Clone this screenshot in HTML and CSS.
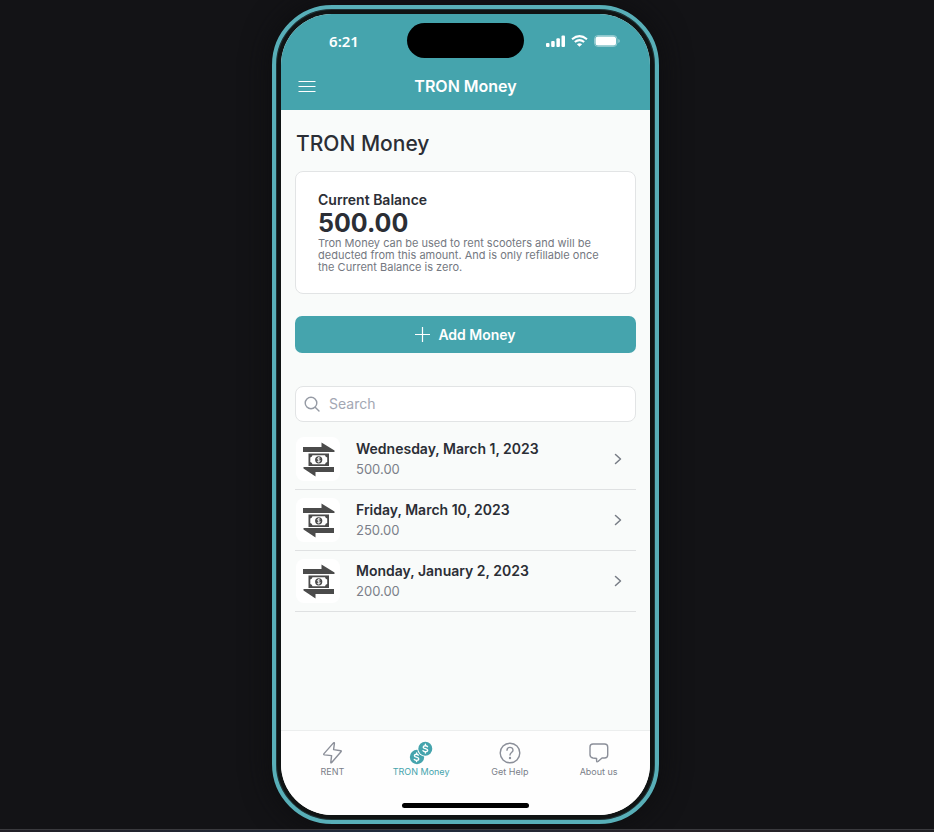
FILE: index.html
```html
<!DOCTYPE html>
<html lang="en">
<head>
<meta charset="utf-8">
<meta name="viewport" content="width=device-width, initial-scale=1">
<title>TRON Money</title>
<link rel="stylesheet" href="styles.css">
</head>
<body>
<svg width="0" height="0" class="sprite" aria-hidden="true">
  <symbol id="transfer" viewBox="0 0 44 44">
    <path fill="#4b4b4b" d="M7 10H25.500V5.500L38.500 13.500V15H7ZM38 30H7.500V31.500L19.500 39.500V35H38Z"/>
    <rect x="12.500" y="16.500" width="20.500" height="12.500" fill="#4b4b4b"/>
    <path fill="#fff" d="M16.500 18.300H29Q29.400 20.100 31.200 20.500V25Q29.400 25.500 29 27.300H16.500Q16 25.500 14.300 25V20.500Q16 20.100 16.500 18.300Z"/>
    <circle cx="22.700" cy="22.800" r="3.600" fill="#4b4b4b"/>
    <path fill="none" stroke="#fff" stroke-width=".8" d="M24.200 21.400C23.300 20.500 21.400 20.700 21.400 21.800C21.400 23 24.200 22.500 24.200 23.800C24.200 25 22 25.100 21.200 24.200M22.700 20V25.500"/>
  </symbol>
  <symbol id="chevron" viewBox="0 0 12 12">
    <path d="M3.500 1.500L8.500 6L3.500 10.500" fill="none" stroke="#777c85" stroke-width="1.500" stroke-linecap="round" stroke-linejoin="round"/>
  </symbol>
</svg>
<main class="stage">
  <div class="phone">
    <div class="screen">
      <header class="top">
        <div class="status">
          <span class="clock">6:21</span>
          <span class="island"></span>
          <span class="signals">
            <svg width="19" height="12" viewBox="0 0 19 12" fill="#fff"><rect y="8" width="3.500" height="4" rx="1"/><rect x="5.200" y="6" width="3.500" height="6" rx="1"/><rect x="10.400" y="3.300" width="3.500" height="8.700" rx="1"/><rect x="15.500" y=".5" width="3.500" height="11.500" rx="1"/></svg>
            <svg width="17" height="12" viewBox="0 0 17 12" fill="none" stroke="#fff" stroke-width="2"><path d="M1 4.300Q8.500-2 16 4.300M3.800 7.100Q8.500 3.200 13.200 7.100"/><path d="M8.500 11.800L5.900 9.200Q8.500 7.200 11.100 9.200Z" fill="#fff" stroke="none"/></svg>
            <svg width="26" height="12" viewBox="0 0 26 12"><rect x=".5" y=".5" width="22.500" height="11" rx="3.500" fill="none" stroke="#fff" stroke-opacity=".4"/><rect x="1.500" y="1.500" width="20.500" height="9" rx="2.500" fill="#fff"/><path d="M24.300 4V8Q25.800 7.300 25.800 6T24.300 4" fill="#fff" fill-opacity=".45"/></svg>
          </span>
        </div>
        <div class="bar">
          <button class="menu" type="button" aria-label="Menu"><svg width="18" height="14" viewBox="0 0 18 14" stroke="#fff" stroke-width="1.200"><path d="M.5 2.500H17.500M.5 7.500H17.500M.5 12.500H17.500"/></svg></button>
          <span class="bar-title">TRON Money</span>
        </div>
      </header>
      <section class="content">
        <h1>TRON Money</h1>
        <div class="card">
          <h2>Current Balance</h2>
          <strong class="amount">500.00</strong>
          <p>Tron Money can be used to rent scooters and will be deducted from this amount. And is only refillable once the Current Balance is zero.</p>
        </div>
        <button class="add" type="button"><svg width="15" height="15" viewBox="0 0 15 15" stroke="#fff" stroke-width="1.200"><path d="M7.500 0V15M0 7.500H15"/></svg>Add Money</button>
        <label class="search">
          <svg width="16" height="16" viewBox="0 0 16 16" fill="none" stroke="#959aa4" stroke-width="1.400" stroke-linecap="round"><circle cx="7" cy="7" r="5.800"/><path d="M11.200 11.200L15 15"/></svg>
          <input type="search" placeholder="Search" aria-label="Search">
        </label>
        <ul class="list">
          <li><a href="#"><svg class="thumb"><use href="#transfer"/></svg><span class="entry"><b>Wednesday, March 1, 2023</b><span>500.00</span></span><svg class="chev"><use href="#chevron"/></svg></a></li>
          <li><a href="#"><svg class="thumb"><use href="#transfer"/></svg><span class="entry"><b>Friday, March 10, 2023</b><span>250.00</span></span><svg class="chev"><use href="#chevron"/></svg></a></li>
          <li><a href="#"><svg class="thumb"><use href="#transfer"/></svg><span class="entry"><b>Monday, January 2, 2023</b><span>200.00</span></span><svg class="chev"><use href="#chevron"/></svg></a></li>
        </ul>
      </section>
      <footer class="bottom">
        <nav class="tabs">
          <a href="#"><svg width="24" height="24" viewBox="0 0 24 24" fill="none" stroke="#8b8f99" stroke-width="1.400" stroke-linejoin="round"><path d="M13.500 1.900Q14.500 1.100 14.400 2.300L13.600 8.600L20.700 9.700Q21.700 9.900 21 10.700L11.700 21.500Q10.600 22.500 10.800 21.100L11.600 14.600L4.500 13.900Q3.200 13.700 4 12.600Z"/></svg>RENT</a>
          <a href="#" class="active" aria-current="page"><svg width="24" height="24" viewBox="0 0 24 24"><g fill="#45a4ad"><circle cx="8" cy="16" r="7.200"/><circle cx="16.300" cy="7.700" r="8" fill="#fff"/><circle cx="16.300" cy="7.700" r="7"/></g><g fill="none" stroke="#fff" stroke-width="1.400" stroke-linecap="round"><path d="M18.500 5.700C17.600 4.300 14.200 4.400 14.200 6.200C14.200 8.200 18.700 7.100 18.700 9.300C18.700 11.200 15 11.300 14 9.700M16.400 3.300V4.600M16.400 10.800V12"/><path d="M9.300 14.100C8.500 12.900 5.400 13 5.400 14.700C5.400 16.500 9.800 15.900 9.800 18C9.800 19.700 6.400 19.900 5.300 18.400M7.600 12V13.200M7.600 19.400V20.500"/></g></svg>TRON Money</a>
          <a href="#"><svg width="24" height="24" viewBox="0 0 24 24" fill="none" stroke="#8b8f99" stroke-width="1.400" stroke-linecap="round"><circle cx="12" cy="12" r="9.800"/><path d="M9 9.300C9 5.400 15 5.400 15 9.200C15 11.600 12 11.500 12 14"/><circle cx="12" cy="17" r=".5" fill="#8b8f99"/></svg>Get Help</a>
          <a href="#"><svg width="24" height="24" viewBox="0 0 24 24" fill="none" stroke="#8b8f99" stroke-width="1.400" stroke-linejoin="round"><path d="M6 3H17.500Q20.700 3 20.700 6V14Q20.700 17 17.500 17H15L11 20.500Q9.700 21.400 9.600 20V17.500L6 17Q3 16.500 3 13.800V6Q3 3 6 3Z"/></svg>About us</a>
        </nav>
        <span class="home"></span>
      </footer>
    </div>
  </div>
</main>
<div class="edge"></div>
</body>
</html>
```
FILE: styles.css
```css
* { box-sizing: border-box; }

body {
  margin: 0;
  min-height: 100vh;
  display: flex;
  flex-direction: column;
  background: #131316;
  color: #2b2e35;
  font-family: Inter, "Liberation Sans", sans-serif;
}

.sprite { position: absolute; }
svg { flex: none; }
h1, h2, p, ul { margin: 0; padding: 0; }
button { border: 0; padding: 0; font: inherit; color: inherit; cursor: pointer; }
a { color: inherit; text-decoration: none; }

.stage {
  flex: 1;
  display: flex;
  justify-content: center;
  padding: 5px 3px 5px 0;
}

.phone {
  width: 100%;
  max-width: 387px;
  display: flex;
  padding: 5px;
  border: 4px solid #58afb8;
  border-radius: 60px;
  background: #101414;
  box-shadow: inset 0 0 0 1px #1f3437, 0 0 30px #0d0d0f;
}

.screen {
  flex: 1;
  display: flex;
  flex-direction: column;
  overflow: hidden;
  border-radius: 51px;
  background: #f9fbfa;
}

.top { background: #45a4ad; color: #fff; }

.status {
  display: grid;
  grid-template-columns: 1fr 117px 1fr;
  align-items: center;
  padding-top: 9px;
}
.clock {
  text-align: center;
  font: 600 15px/20px "Noto Sans", sans-serif;
}
.island { height: 35px; border-radius: 18px; background: #000; }
.signals {
  display: flex;
  align-items: center;
  gap: 6px;
  padding-left: 22px;
}

.bar {
  display: grid;
  grid-template-columns: 18px 1fr 18px;
  align-items: center;
  padding: 17px 17px 13px;
}
.menu { display: flex; background: none; }
.bar-title { text-align: center; font-size: 16px; font-weight: 600; line-height: 22px; }

.content { flex: 1; padding: 22px 14px 0; }

h1 { padding-left: 1px; font-size: 21px; font-weight: 500; line-height: 24px; }

.card {
  margin-top: 15px;
  padding: 18px 22px 20px;
  border: 1px solid #e2e4e5;
  border-radius: 8px;
  background: #fff;
}
h2 { font-size: 14px; font-weight: 600; line-height: 20px; }
.amount { display: block; font-size: 25px; font-weight: 700; line-height: 27px; }
p { color: #747881; font-size: 11px; line-height: 12px; }

.add {
  display: flex;
  justify-content: center;
  align-items: center;
  gap: 8px;
  width: 100%;
  height: 37px;
  margin-top: 22px;
  border-radius: 7px;
  background: #45a4ad;
  color: #fff;
  font-size: 14px;
  font-weight: 600;
}

.search {
  display: flex;
  align-items: center;
  gap: 9px;
  height: 36px;
  margin-top: 33px;
  padding: 0 8px;
  border: 1px solid #e2e4e5;
  border-radius: 8px;
  background: #fff;
}
.search input {
  flex: 1;
  min-width: 0;
  padding: 0;
  border: 0;
  outline: 0;
  background: none;
  color: inherit;
  font: 14px/20px Inter, sans-serif;
}
.search input::placeholder { color: #a3a7b3; }

.list { margin-top: 7px; list-style: none; }
.list a {
  display: flex;
  align-items: center;
  gap: 16px;
  height: 61px;
  padding: 0 12px 0 1px;
  border-bottom: 1px solid #dfe1e2;
}
.thumb { width: 44px; height: 44px; border-radius: 8px; background: #fff; }
.entry { flex: 1; display: grid; font-size: 14px; line-height: 20px; }
.entry b { font-weight: 600; }
.entry span { color: #7b7f89; font-size: 13px; }
.chev { width: 12px; height: 12px; }

.bottom {
  display: flex;
  flex-direction: column;
  align-items: center;
  padding: 10px 7px 7px;
  border-top: 1px solid #eceeee;
  background: #fefefe;
}
.tabs { display: grid; grid-template-columns: repeat(4, 1fr); width: 100%; }
.tabs a {
  display: flex;
  flex-direction: column;
  align-items: center;
  color: #7b7f89;
  font-size: 9px;
  line-height: 14px;
}
.tabs .active { color: #45a4ad; }
.home { width: 127px; height: 5px; margin-top: 24px; border-radius: 3px; background: #000; }

.edge { height: 3px; border-top: 1px solid #3a3a3e; background: linear-gradient(90deg, #211f26, #202c3e 45%, #292329 70%, #202024); }
```
